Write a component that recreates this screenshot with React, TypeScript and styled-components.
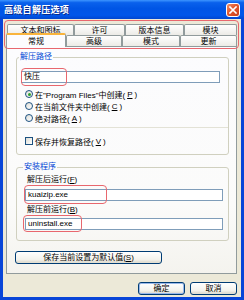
import React from "react";
import styled, { createGlobalStyle } from "styled-components";

const GlobalStyle = createGlobalStyle`
  html, body {
    margin: 0;
    padding: 0;
    background: #fff;
  }
  body {
    font-family: "Liberation Sans", "Noto Sans CJK SC", sans-serif;
    font-size: 8px;
    color: #000;
  }
  * {
    box-sizing: border-box;
  }
`;

const Window = styled.div`
  width: 244px;
  height: 300px;
  display: flex;
  flex-direction: column;
  background: #0845d8;
  overflow: hidden;
`;

const TitleBar = styled.div`
  height: 19px;
  flex: none;
  display: flex;
  align-items: center;
  justify-content: space-between;
  padding: 0 4px 0 4px;
  background: linear-gradient(
    to bottom,
    #3d95ff 0%,
    #0a61ec 14%,
    #0055e5 45%,
    #0057ea 80%,
    #0046d0 100%
  );
`;

const Title = styled.div`
  color: #fff;
  font-size: 9px;
  font-weight: bold;
  letter-spacing: 0.3px;
  text-shadow: 1px 1px 0 #0c2b8a;
`;

const CloseBtn = styled.div`
  width: 14px;
  height: 14px;
  border: 1px solid #fff;
  border-radius: 3px;
  background: linear-gradient(135deg, #f0906a 0%, #e2572c 45%, #c8401c 100%);
  display: flex;
  align-items: center;
  justify-content: center;
`;

const Body = styled.div`
  flex: 1;
  margin: 0 3px 3px 3px;
  background: #ece9d8;
  display: flex;
  flex-direction: column;
`;

const TabArea = styled.div`
  position: relative;
  margin-top: 5px;
`;

const TabRow = styled.div<{ $pad: number }>`
  display: flex;
  align-items: flex-start;
  height: 11px;
  padding-left: ${(p) => p.$pad}px;
`;

const Tab = styled.div<{ $w: number; $active?: boolean }>`
  width: ${(p) => p.$w}px;
  height: ${(p) => (p.$active ? 14 : 11)}px;
  margin-top: ${(p) => (p.$active ? -2 : 0)}px;
  position: relative;
  z-index: ${(p) => (p.$active ? 2 : 1)};
  display: flex;
  align-items: center;
  justify-content: center;
  border: 1px solid #919b9c;
  border-bottom: none;
  border-top: ${(p) => (p.$active ? "2px solid #f9b43c" : "1px solid #919b9c")};
  border-radius: 2px 2px 0 0;
  background: ${(p) =>
    p.$active ? "#fcfcfe" : "linear-gradient(to bottom, #ffffff, #ecebe6)"};
  font-size: 8px;
  line-height: 9px;
  padding-top: ${(p) => (p.$active ? 0 : 1)}px;
`;

const Mark = styled.span<{ $l: number; $t: number; $w: number; $h: number }>`
  position: absolute;
  left: ${(p) => p.$l}px;
  top: ${(p) => p.$t}px;
  width: ${(p) => p.$w}px;
  height: ${(p) => p.$h}px;
  border: 1.5px solid #e8676e;
  border-radius: 4px;
  pointer-events: none;
  z-index: 5;
`;

const Panel = styled.div`
  height: 228px;
  margin: 0 4px 0 3px;
  border: 1px solid #919b9c;
  background: linear-gradient(to bottom, #fcfcfe 0%, #fbfbfa 70%, #f4f3ee 100%);
  display: flex;
  flex-direction: column;
  align-items: flex-start;
`;

const Group = styled.fieldset<{ $top: number; $pad: string }>`
  width: 213px;
  margin: ${(p) => p.$top}px 0 0 9px;
  padding: ${(p) => p.$pad};
  border: 1px solid #d0d0bf;
  border-radius: 3px;
  min-width: 0;
`;

const Legend = styled.legend`
  color: #0046d5;
  font-size: 8px;
  line-height: 10px;
  padding: 0 1px;
  margin-left: -2px;
`;

const Field = styled.div<{ $mt?: number }>`
  position: relative;
  height: 12px;
  margin-top: ${(p) => p.$mt ?? 0}px;
  border: 1px solid #7f9db9;
  background: #fff;
  padding-left: 2px;
  display: flex;
  align-items: center;
  font-size: 8px;
  line-height: 10px;
`;

const OptionList = styled.div`
  margin-top: 5px;
  padding-left: 4px;
  display: flex;
  flex-direction: column;
`;

const Option = styled.div`
  height: 12px;
  display: flex;
  align-items: center;
  gap: 2px;
  font-size: 8px;
`;

const Radio = styled.span<{ $on?: boolean }>`
  width: 8px;
  height: 8px;
  border-radius: 50%;
  border: 1px solid #1c5180;
  background: linear-gradient(135deg, #dcdcd5, #ffffff);
  display: flex;
  align-items: center;
  justify-content: center;
  &::after {
    content: "";
    width: 3px;
    height: 3px;
    border-radius: 50%;
    background: ${(p) => (p.$on ? "#2ba12b" : "transparent")};
  }
`;

const Check = styled.span`
  width: 8px;
  height: 8px;
  border: 1px solid #1c5180;
  background: linear-gradient(135deg, #dcdcd5, #ffffff);
`;

const Divider = styled.div`
  height: 1px;
  margin: 3px -8px 0 -4px;
  background: #e3e2d6;
`;

const CheckRow = styled(Option)`
  margin-top: 7px;
  padding-left: 4px;
`;

const Label = styled.div<{ $mt?: number }>`
  height: 10px;
  line-height: 10px;
  padding-left: 2px;
  margin-top: ${(p) => p.$mt ?? 0}px;
  font-size: 8px;
`;

const Key = styled.span`
  text-decoration: underline;
`;

const Button = styled.div<{ $w: number; $default?: boolean }>`
  width: ${(p) => p.$w}px;
  height: 13px;
  border: 1px solid #003c74;
  border-radius: 3px;
  background: linear-gradient(to bottom, #ffffff 0%, #f3f2ec 70%, #d8d3c6 100%);
  box-shadow: ${(p) =>
    p.$default ? "inset 0 0 0 1px #9ab9ea" : "inset 0 -1px 0 #e3e0d3"};
  display: flex;
  align-items: center;
  justify-content: center;
  font-size: 8px;
  line-height: 9px;
`;

const SaveButton = styled(Button)`
  margin: 10px 0 0 8px;
`;

const Footer = styled.div`
  margin-top: 8px;
  padding-right: 4px;
  display: flex;
  justify-content: flex-end;
  gap: 5px;
`;

export default function App() {
  return (
    <>
      <GlobalStyle />
      <Window>
        <TitleBar>
          <Title>高级自解压选项</Title>
          <CloseBtn>
            <svg width="8" height="8" viewBox="0 0 8 8">
              <path d="M1 1 L7 7 M7 1 L1 7" stroke="#fff" strokeWidth="1.6" strokeLinecap="square" />
            </svg>
          </CloseBtn>
        </TitleBar>
        <Body>
          <TabArea>
            <TabRow $pad={4}>
              <Tab $w={67}>文本和图标</Tab>
              <Tab $w={51}>许可</Tab>
              <Tab $w={59}>版本信息</Tab>
              <Tab $w={53}>模块</Tab>
            </TabRow>
            <TabRow $pad={3}>
              <Tab $w={60} $active>常规</Tab>
              <Tab $w={56}>高级</Tab>
              <Tab $w={58}>模式</Tab>
              <Tab $w={57}>更新</Tab>
            </TabRow>
            <Mark $l={1} $t={-4} $w={235} $h={29} />
          </TabArea>
          <Panel>
            <Group $top={5} $pad="9px 8px 7px 4px">
              <Legend>解压路径</Legend>
              <Field>
                快压
                <Mark $l={-1} $t={-4} $w={46} $h={18} />
              </Field>
              <OptionList>
                <Option>
                  <Radio $on />在"Program Files"中创建(<Key>P</Key>)
                </Option>
                <Option>
                  <Radio />在当前文件夹中创建(<Key>C</Key>)
                </Option>
                <Option>
                  <Radio />绝对路径(<Key>A</Key>)
                </Option>
              </OptionList>
              <Divider />
              <CheckRow>
                <Check />保存并恢复路径(<Key>V</Key>)
              </CheckRow>
            </Group>
            <Group $top={7} $pad="3px 5px 10px 8px">
              <Legend>安装程序</Legend>
              <Label>
                解压后运行(<Key>F</Key>)
              </Label>
              <Field $mt={4}>
                kuaizip.exe
                <Mark $l={-2} $t={-5} $w={83} $h={19} />
              </Field>
              <Label $mt={4}>
                解压前运行(<Key>B</Key>)
              </Label>
              <Field $mt={3}>
                uninstall.exe
                <Mark $l={-3} $t={-4} $w={59} $h={17} />
              </Field>
            </Group>
            <SaveButton $w={147}>
              保存当前设置为默认值(<Key>S</Key>)
            </SaveButton>
          </Panel>
          <Footer>
            <Button $w={47} $default>确定</Button>
            <Button $w={47}>取消</Button>
          </Footer>
        </Body>
      </Window>
    </>
  );
}
